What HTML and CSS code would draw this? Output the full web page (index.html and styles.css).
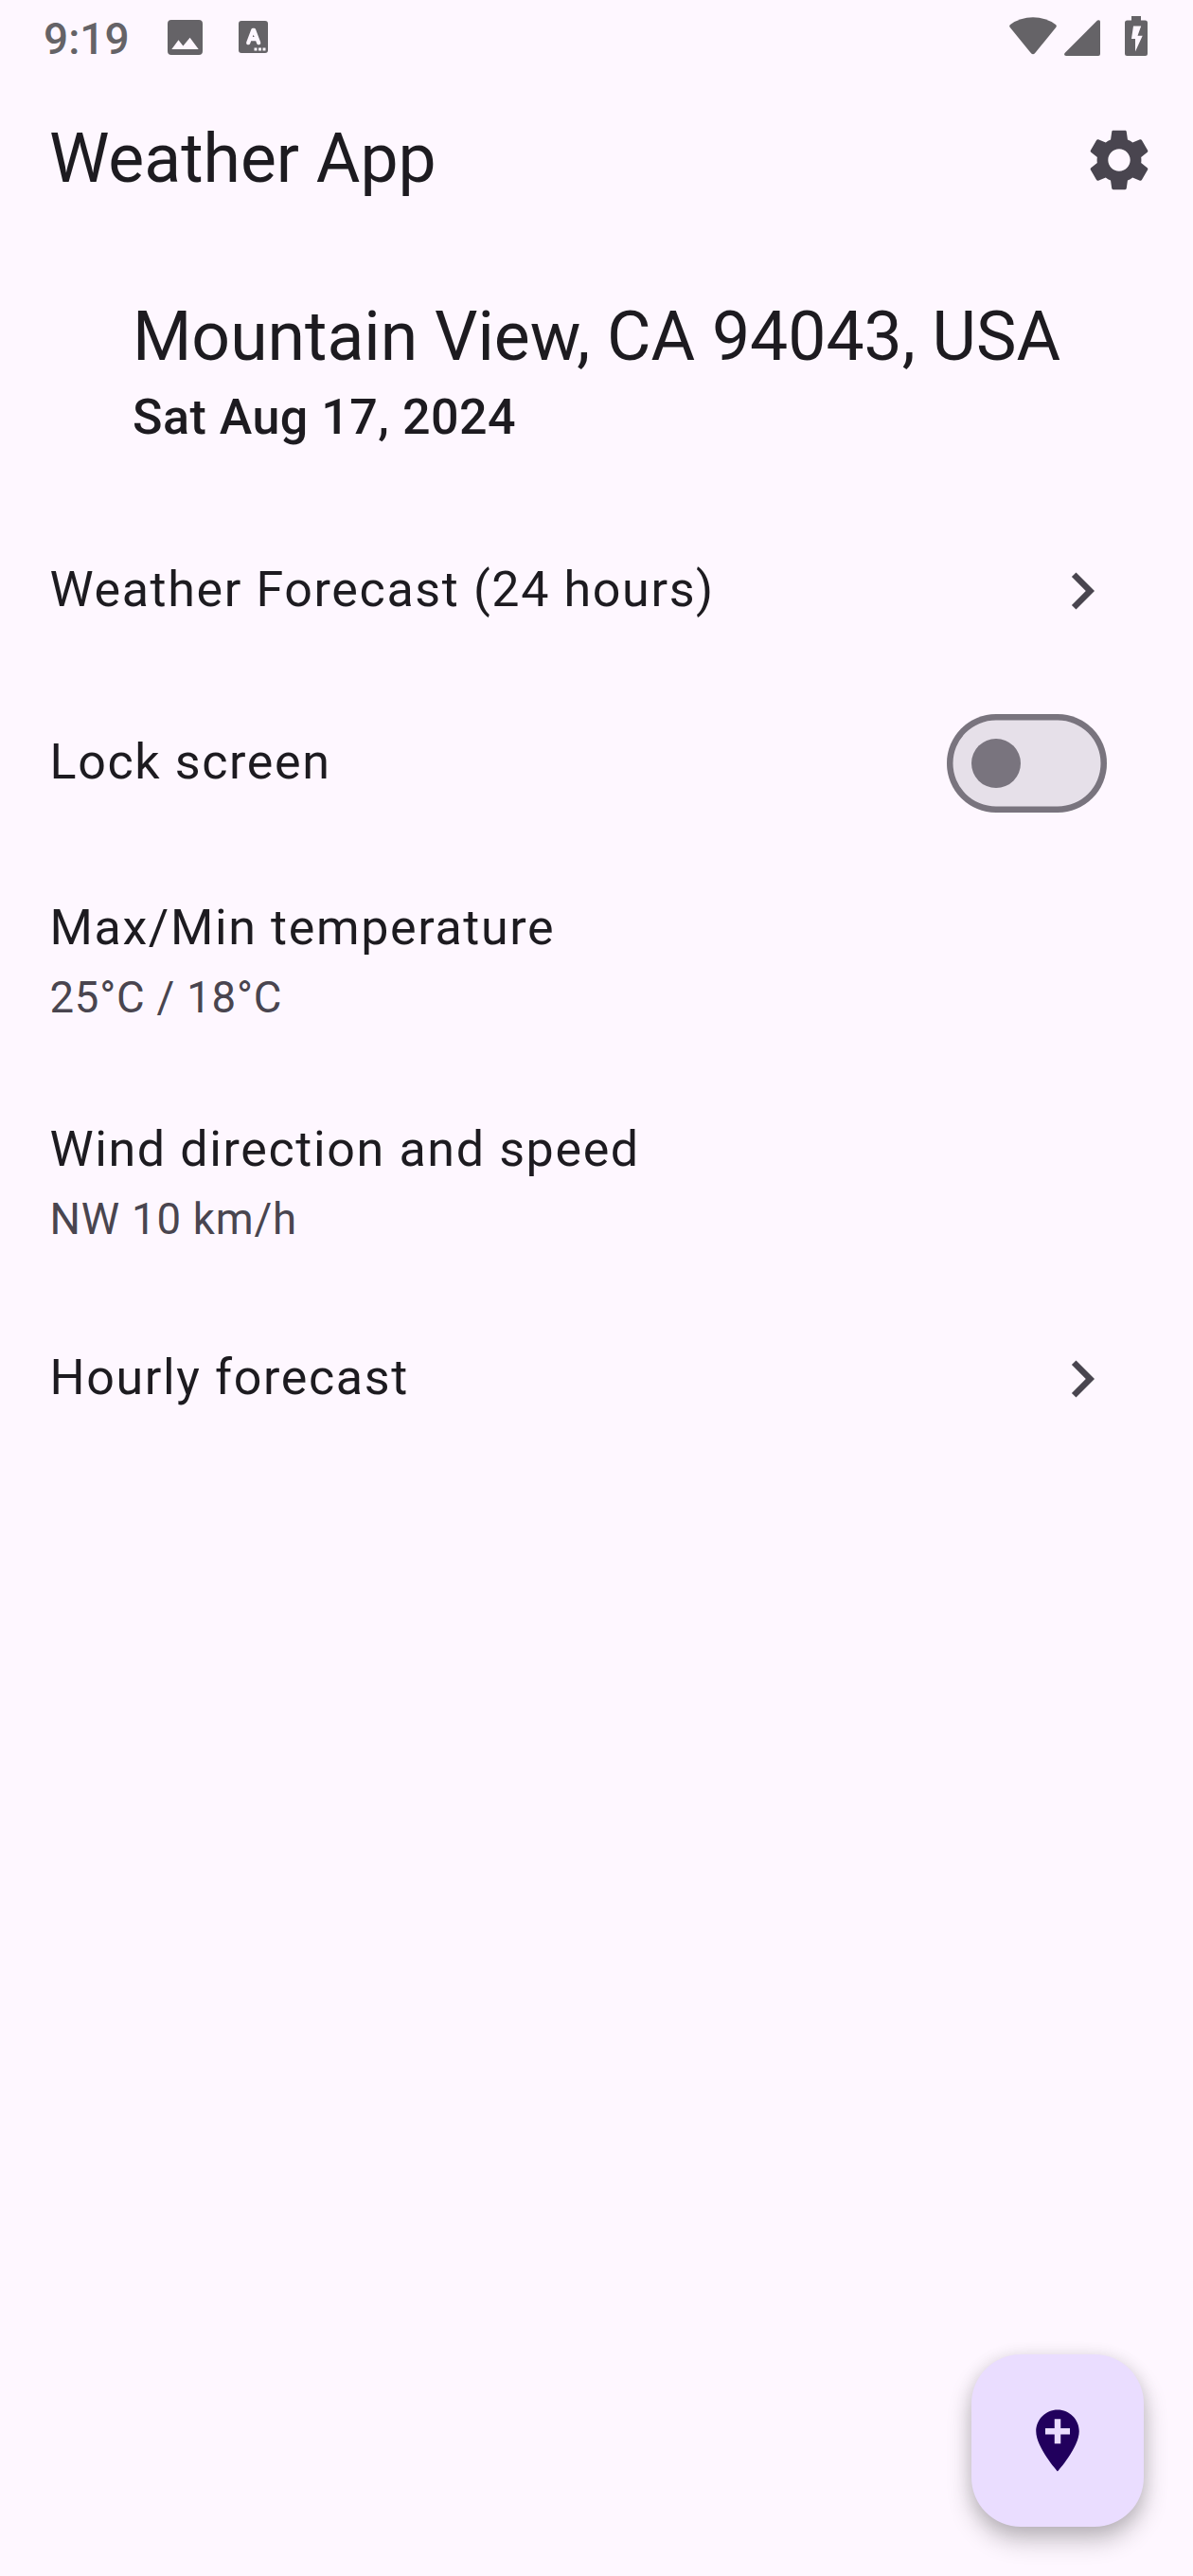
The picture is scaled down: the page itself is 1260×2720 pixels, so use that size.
FILE: index.html
```html
<!DOCTYPE html>
<html lang="en">
<head>
<meta charset="utf-8">
<title>Weather App</title>
<link rel="stylesheet" href="styles.css">
</head>
<body>
<div class="screen">
  <header class="status">
    <span class="clock">9:19</span>
    <svg class="ic-photo" viewBox="0 0 37 37"><path fill-rule="evenodd" d="M4 0H33Q37 0 37 4V33Q37 37 33 37H4Q0 37 0 33V4Q0 0 4 0ZM4.300 31H32.700L23.600 18.800L16.400 27.600L11.500 21.200Z"/></svg>
    <svg class="ic-lang" viewBox="0 0 31 34"><rect width="31" height="34" rx="3"/><path class="cut-line" d="M10.200 23.200L15.200 9.900H16.200L21.200 23.200M12 19.200H19.500"/><path class="cut" d="M16.500 28.500h3v3h-3zM21 28.500h3v3h-3zM25.500 28.500h3v3h-3z"/></svg>
    <span class="spacer"></span>
    <svg class="ic-wifi" viewBox="0 0 50 40"><path d="M.6 10.800Q-.4 9.300 1 8Q11.500 .3 25 .3T49 8Q50.400 9.300 49.400 10.800L27 38.300Q25 40.400 23 38.300Z"/></svg>
    <svg class="ic-signal" viewBox="0 0 38 38"><path d="M35 .6Q38-.8 38 2V36Q38 38 36 38H2Q-1 37.500 .6 35Z"/></svg>
    <svg class="ic-battery" viewBox="0 0 24 42"><path fill-rule="evenodd" d="M7 0H17V4.500H21.500Q24 4.500 24 7V39.500Q24 42 21.500 42H2.500Q0 42 0 39.500V7Q0 4.500 2.500 4.500H7ZM9 10.500L7 24H11V37.500L18.700 20.700H13.500L17.200 10.500Z"/></svg>
  </header>
  <div class="appbar">
    <h1 class="title">Weather App</h1>
    <svg class="icon" viewBox="0 0 24 24"><path d="M19.140 12.940c.04-.3.060-.61.060-.94 0-.32-.02-.64-.07-.94l2.030-1.580c.18-.14.230-.41.120-.61l-1.920-3.320c-.12-.22-.37-.29-.59-.22l-2.390.96c-.5-.38-1.030-.7-1.620-.94l-.36-2.540c-.04-.24-.24-.41-.48-.41h-3.840c-.24 0-.43.170-.47.410l-.36 2.540c-.59.240-1.130.570-1.620.940l-2.390-.96c-.22-.08-.47 0-.59.220L2.740 8.870c-.12.210-.08.470.120.610l2.030 1.580c-.05.300-.09.630-.09.940s.02.640.070.940l-2.030 1.580c-.18.140-.23.410-.12.610l1.920 3.320c.12.220.37.290.590.220l2.390-.96c.5.380 1.030.7 1.620.940l.36 2.540c.05.240.24.410.480.410h3.840c.24 0 .44-.17.470-.41l.36-2.540c.59-.24 1.130-.56 1.620-.94l2.390.96c.22.080.47 0 .59-.22l1.920-3.320c.12-.22.070-.47-.12-.61l-2.010-1.580zM12 15.600c-1.980 0-3.600-1.620-3.600-3.600s1.620-3.600 3.600-3.600 3.600 1.620 3.600 3.600-1.620 3.600-3.600 3.600z"/></svg>
  </div>
  <section class="place">
    <h2 class="address">Mountain View, CA 94043, USA</h2>
    <p class="date">Sat Aug 17, 2024</p>
  </section>
  <main class="list">
    <div class="row">
      <span class="label">Weather Forecast (24 hours)</span>
      <svg class="icon" viewBox="0 0 24 24"><path d="M8.590 16.590L13.170 12 8.590 7.410 10 6l6 6-6 6z"/></svg>
    </div>
    <div class="row">
      <span class="label">Lock screen</span>
      <span class="switch"><span class="thumb"></span></span>
    </div>
    <div class="row row-tall">
      <div class="lines"><span class="label">Max/Min temperature</span><span class="value">25°C / 18°C</span></div>
    </div>
    <div class="row row-tall">
      <div class="lines"><span class="label">Wind direction and speed</span><span class="value">NW 10 km/h</span></div>
    </div>
    <div class="row">
      <span class="label">Hourly forecast</span>
      <svg class="icon" viewBox="0 0 24 24"><path d="M8.590 16.590L13.170 12 8.590 7.410 10 6l6 6-6 6z"/></svg>
    </div>
  </main>
  <button class="fab" aria-label="Add location">
    <svg class="icon" viewBox="0 0 24 24"><path d="M12 2C8.140 2 5 5.140 5 9c0 5.250 7 13 7 13s7-7.750 7-13c0-3.860-3.140-7-7-7zm4 8h-3v3h-2v-3H8V8h3V5h2v3h3v2z"/></svg>
  </button>
</div>
</body>
</html>
```
FILE: styles.css
```css
* { box-sizing: border-box; margin: 0; padding: 0; }
body { background: #fef7ff; color: #1d1b20; font-family: Roboto, sans-serif; }
svg { display: block; flex: none; fill: currentColor; }
.screen { width: 1260px; height: 2720px; display: flex; flex-direction: column; overflow: hidden; }

.status { height: 78px; flex: none; display: flex; align-items: flex-start; padding: 0 48px 0 46px; color: #656367; }
.clock { width: 130.500px; padding-top: 14px; font-size: 46px; line-height: 54px; font-weight: 500; }
.spacer { flex: 1; }
.ic-photo { width: 37px; height: 37px; margin: 20.500px 38px 0 0; }
.ic-lang { width: 31px; height: 34px; margin-top: 22px; }
.cut { fill: #fef7ff; }
.cut-line { fill: none; stroke: #fef7ff; stroke-width: 4.200; stroke-linejoin: round; stroke-linecap: round; }
.ic-wifi { width: 50px; height: 40px; margin: 18px 8px 0 0; }
.ic-signal { width: 38px; height: 38px; margin: 21px 26px 0 0; }
.ic-battery { width: 24px; height: 42px; margin-top: 17px; }

.appbar { height: 182px; flex: none; display: flex; align-items: center; justify-content: space-between; padding: 0 39px 0 52px; }
.title, .address { font-size: 71.500px; line-height: 91px; font-weight: 400; }
.title { padding-bottom: 3px; }
.icon { width: 78px; height: 78px; }
.appbar .icon, .row .icon { color: #49454f; }

.place { align-self: center; height: 273px; padding-top: 50px; }
.date { margin-top: 1px; font-size: 52px; line-height: 78px; font-weight: 500; letter-spacing: .5px; }

.list { display: flex; flex-direction: column; }
.row { height: 182px; display: flex; align-items: center; justify-content: space-between; padding: 0 78px 0 52.500px; }
.row-tall { height: 234px; padding-bottom: 1px; }
.lines { display: flex; flex-direction: column; }
.label { font-size: 52px; line-height: 78px; letter-spacing: 1.625px; padding-bottom: 2px; }
.value { font-size: 45.500px; line-height: 65px; letter-spacing: .8px; color: #49454f; }
.switch { width: 169px; height: 104px; margin-right: 13px; padding-left: 26px; display: flex; align-items: center; border-radius: 52px; background: #e6e0e9; box-shadow: inset 0 0 0 6.500px #79747e; }
.thumb { width: 52px; height: 52px; border-radius: 50%; background: #79747e; }

.fab { width: 182px; height: 182px; margin: auto 52px 52px auto; flex: none; display: grid; place-items: center; border: 0; border-radius: 52px; background: #eaddff; color: #21005d; box-shadow: 0 14px 26px rgba(0,0,0,.24), 0 2px 18px rgba(0,0,0,.1); }
```
